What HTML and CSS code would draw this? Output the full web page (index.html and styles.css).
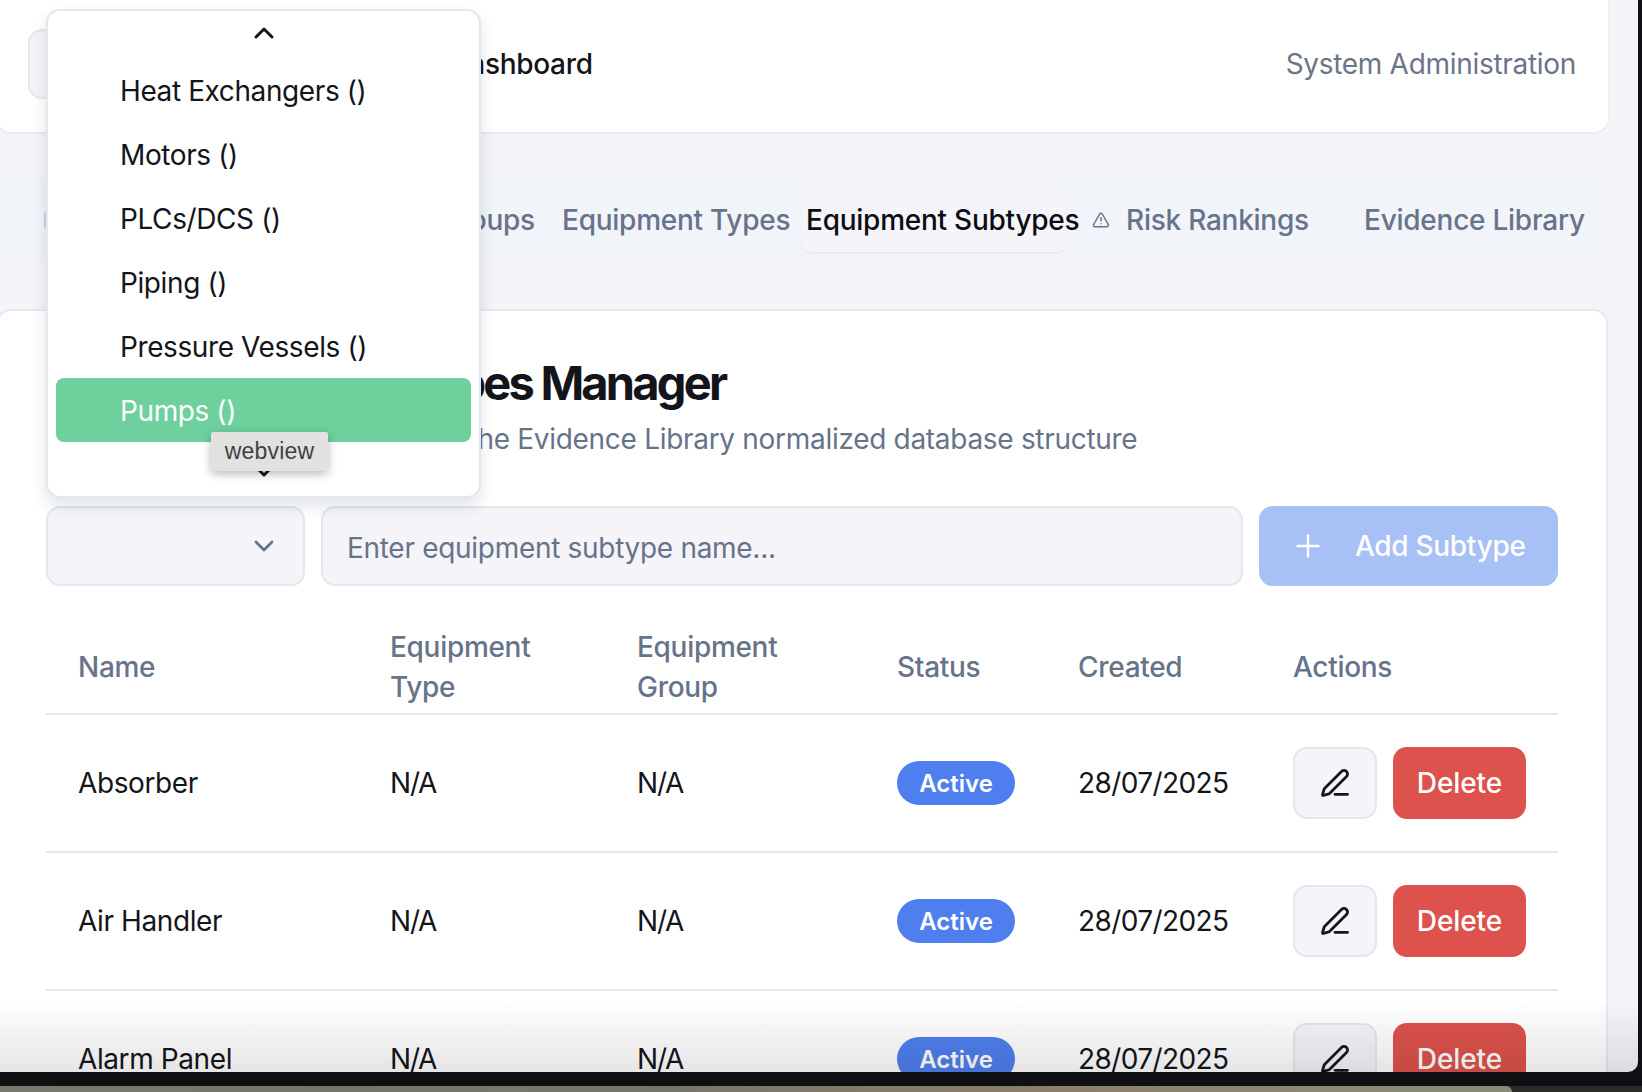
FILE: index.html
```html
<!DOCTYPE html>
<html lang="en">
<head>
  <meta charset="UTF-8">
  <title>Equipment Subtypes Manager</title>
  <link rel="stylesheet" href="styles.css">
</head>
<body>
  <div class="window">
    <div class="page">
      <header class="top-card">
        <a class="back-btn">Back</a>
        <span class="top-title">Admin Dashboard</span>
        <span class="top-note">System Administration</span>
      </header>

      <nav class="tabs">
        <svg class="first-tab-icon" viewBox="0 0 24 24" fill="none" stroke="currentColor" stroke-width="2"><rect x="1" y="3" width="22" height="18" rx="3"/></svg>
        <span class="tab tab-groups">Equipment Groups</span>
        <span class="tab tab-types">Equipment Types</span>
        <span class="tab tab-subtypes">Equipment Subtypes</span>
        <span class="tab tab-risk">
          <svg class="warn-icon" viewBox="0 0 24 24" fill="none" stroke="currentColor" stroke-width="2" stroke-linecap="round" stroke-linejoin="round">
            <path d="M21.7 18 13.7 4a2 2 0 0 0-3.5 0l-8 14a2 2 0 0 0 1.8 3h16a2 2 0 0 0 1.7-3"/>
            <path d="M12 9v4"/>
            <path d="M12 17h.01"/>
          </svg>
          Risk Rankings
        </span>
        <span class="tab tab-evidence">Evidence Library</span>
      </nav>

      <main class="manager">
        <h1>Equipment Subtypes Manager</h1>
        <p class="subtitle">Manage equipment subtypes in the Evidence Library normalized database structure</p>

        <div class="add-row">
          <div class="select-box">
            <svg class="chev" viewBox="0 0 24 24" fill="none" stroke="currentColor" stroke-width="2" stroke-linecap="round" stroke-linejoin="round"><path d="m6 9 6 6 6-6"/></svg>
          </div>
          <div class="name-input">Enter equipment subtype name...</div>
          <button class="add-btn" type="button">
            <svg class="plus" viewBox="0 0 24 24" fill="none" stroke="currentColor" stroke-width="1.6" stroke-linecap="round"><path d="M5 12h14"/><path d="M12 5v14"/></svg>
            Add Subtype
          </button>
        </div>

        <table>
          <thead>
            <tr>
              <th class="col-name">Name</th>
              <th class="col-type">Equipment<br>Type</th>
              <th class="col-group">Equipment<br>Group</th>
              <th class="col-status">Status</th>
              <th class="col-created">Created</th>
              <th>Actions</th>
            </tr>
          </thead>
          <tbody>
            <tr>
              <td>Absorber</td>
              <td class="na">N/A</td>
              <td class="na">N/A</td>
              <td><span class="badge">Active</span></td>
              <td class="date">28/07/2025</td>
              <td>
                <div class="actions">
                  <button class="edit-btn" type="button">
                    <svg viewBox="0 0 24 24" fill="none" stroke="currentColor" stroke-width="2.2" stroke-linecap="round" stroke-linejoin="round"><path d="M12 21h10"/><path d="M21.2 6.8a2.8 2.8 0 0 0-4-4L3.8 16.2a2 2 0 0 0-.5.8l-1.3 4.4a.5.5 0 0 0 .6.6l4.4-1.3a2 2 0 0 0 .8-.5z"/></svg>
                  </button>
                  <button class="delete-btn" type="button">Delete</button>
                </div>
              </td>
            </tr>
            <tr>
              <td>Air Handler</td>
              <td class="na">N/A</td>
              <td class="na">N/A</td>
              <td><span class="badge">Active</span></td>
              <td class="date">28/07/2025</td>
              <td>
                <div class="actions">
                  <button class="edit-btn" type="button">
                    <svg viewBox="0 0 24 24" fill="none" stroke="currentColor" stroke-width="2.2" stroke-linecap="round" stroke-linejoin="round"><path d="M12 21h10"/><path d="M21.2 6.8a2.8 2.8 0 0 0-4-4L3.8 16.2a2 2 0 0 0-.5.8l-1.3 4.4a.5.5 0 0 0 .6.6l4.4-1.3a2 2 0 0 0 .8-.5z"/></svg>
                  </button>
                  <button class="delete-btn" type="button">Delete</button>
                </div>
              </td>
            </tr>
            <tr>
              <td>Alarm Panel</td>
              <td class="na">N/A</td>
              <td class="na">N/A</td>
              <td><span class="badge">Active</span></td>
              <td class="date">28/07/2025</td>
              <td>
                <div class="actions">
                  <button class="edit-btn" type="button">
                    <svg viewBox="0 0 24 24" fill="none" stroke="currentColor" stroke-width="2.2" stroke-linecap="round" stroke-linejoin="round"><path d="M12 21h10"/><path d="M21.2 6.8a2.8 2.8 0 0 0-4-4L3.8 16.2a2 2 0 0 0-.5.8l-1.3 4.4a.5.5 0 0 0 .6.6l4.4-1.3a2 2 0 0 0 .8-.5z"/></svg>
                  </button>
                  <button class="delete-btn" type="button">Delete</button>
                </div>
              </td>
            </tr>
          </tbody>
        </table>
      </main>
    </div>

    <div class="dropdown">
      <svg class="scroll-arrow arrow-up" viewBox="0 0 24 24" fill="none" stroke="currentColor" stroke-width="2.2" stroke-linecap="round" stroke-linejoin="round"><path d="m18 15-6-6-6 6"/></svg>
      <div class="option">Heat Exchangers ()</div>
      <div class="option">Motors ()</div>
      <div class="option">PLCs/DCS ()</div>
      <div class="option">Piping ()</div>
      <div class="option">Pressure Vessels ()</div>
      <div class="option option-active">Pumps ()</div>
      <svg class="scroll-arrow arrow-down" viewBox="0 0 24 24" fill="none" stroke="currentColor" stroke-width="2.2" stroke-linecap="round" stroke-linejoin="round"><path d="m6 9 6 6 6-6"/></svg>
    </div>
    <div class="tooltip">webview</div>
    <div class="window-shade"></div>
  </div>
  <div class="desktop">
    <div class="desktop-shape"></div>
  </div>
</body>
</html>
```

FILE: styles.css
```css
* {
  box-sizing: border-box;
}

html, body {
  margin: 0;
  height: 1092px;
  overflow: hidden;
}

body {
  font-family: 'Inter', 'Liberation Sans', sans-serif;
  background: #0f0f14;
  color: #14151a;
  font-size: 28px;
  letter-spacing: -0.3px;
}

.window {
  position: relative;
  width: 1638px;
  height: 1072px;
  overflow: hidden;
  background: #f4f4f9;
  border-radius: 0 0 10px 0;
}

.page {
  display: flex;
  flex-direction: column;
  margin-left: -3px;
  width: 1611px;
  margin-top: -20px;
}

.top-card {
  display: flex;
  align-items: center;
  height: 152px;
  padding: 16px 32px 0 31px;
  background: #fff;
  border-radius: 14px;
  box-shadow: 0 1px 3px rgba(20, 30, 60, 0.08);
}

.back-btn {
  width: 120px;
  height: 70px;
  padding-left: 30px;
  line-height: 66px;
  border: 2px solid #e3e7ee;
  border-radius: 14px;
  background: #f4f4f9;
}

.top-title {
  margin-left: 210px;
  font-weight: 500;
  white-space: nowrap;
}

.top-note {
  margin-left: auto;
  color: #6c7585;
}

.tabs {
  display: flex;
  align-items: center;
  height: 80px;
  margin-top: 48px;
  background: #f1f4f9;
  border-radius: 14px;
  font-weight: 500;
  color: #66738a;
  letter-spacing: -0.25px;
  white-space: nowrap;
}

.first-tab-icon {
  flex: none;
  width: 22px;
  height: 22px;
  margin-left: 47px;
  color: #c9d0dc;
}

.tab {
  display: block;
  flex: none;
}

.tab-groups {
  margin-left: 225px;
  width: 271px;
}

.tab-types {
  width: 240px;
}

.tab-subtypes {
  width: 264px;
  height: 64px;
  line-height: 64px;
  padding-left: 4px;
  background: #f4f4f9;
  border-radius: 8px;
  box-shadow: 0 1px 2px rgba(20, 30, 60, 0.06);
  color: #0c0d12;
}

.tab-risk {
  display: flex;
  align-items: center;
  gap: 16px;
  width: 298px;
  padding-left: 26px;
}

.warn-icon {
  width: 18px;
  height: 18px;
  flex: none;
}

.manager {
  margin-top: 49px;
  padding: 44px 48px 0 47px;
  background: #fff;
  border: 2px solid #e6e9f0;
  border-radius: 14px;
  height: 900px;
}

h1 {
  margin: 0 0 0 58px;
  font-size: 47px;
  line-height: 56px;
  font-weight: 700;
  letter-spacing: -2.8px;
  color: #14151a;
  white-space: nowrap;
}

.subtitle {
  margin: 8px 0 0 7px;
  color: #66738a;
  line-height: 40px;
  white-space: nowrap;
}

.add-row {
  display: flex;
  gap: 16px;
  margin-top: 47px;
  height: 80px;
}

.select-box {
  display: flex;
  align-items: center;
  justify-content: flex-end;
  width: 259px;
  padding-right: 23px;
  border: 2px solid #e3e7ee;
  border-radius: 14px;
  background: #f4f4f9;
  color: #66738a;
}

.chev {
  width: 32px;
  height: 32px;
}

.name-input {
  flex: 1;
  display: flex;
  align-items: center;
  padding: 4px 0 0 24px;
  border: 2px solid #e3e7ee;
  border-radius: 14px;
  background: #f4f4f9;
  color: #66738a;
}

.add-btn {
  display: flex;
  align-items: center;
  gap: 29px;
  width: 299px;
  padding: 0 0 0 31px;
  border: none;
  border-radius: 14px;
  background: #a7c0f6;
  color: #fff;
  font: 500 28px 'Inter', sans-serif;
  letter-spacing: -0.3px;
}

.plus {
  width: 36px;
  height: 36px;
  flex: none;
}

table {
  width: 1512px;
  margin-top: 26px;
  border-collapse: collapse;
  table-layout: fixed;
}

th {
  padding: 8px 0 0;
  height: 102px;
  font-weight: 500;
  color: #66738a;
  text-align: left;
  line-height: 40px;
  vertical-align: middle;
  border-bottom: 2px solid #e3e7ee;
}

th.col-name {
  width: 344px;
  padding-left: 32px;
}

.col-type {
  width: 247px;
}

.col-group {
  width: 260px;
}

.col-status {
  width: 181px;
}

.col-created {
  width: 215px;
}

td {
  height: 138px;
  padding: 0;
  border-bottom: 2px solid #e3e7ee;
  vertical-align: middle;
  letter-spacing: -0.4px;
}

td:first-child {
  padding-left: 32px;
}

td.na {
  letter-spacing: -1.2px;
}

td.date {
  letter-spacing: -0.6px;
}

.badge {
  display: inline-flex;
  align-items: center;
  justify-content: center;
  width: 118px;
  height: 44px;
  border-radius: 22px;
  background: #4f7fef;
  color: #fff;
  font-size: 24px;
  font-weight: 600;
  letter-spacing: 0;
  vertical-align: middle;
}

.actions {
  display: flex;
  gap: 16px;
}

.edit-btn {
  display: flex;
  align-items: center;
  justify-content: center;
  width: 84px;
  height: 72px;
  padding: 0;
  border: 2px solid #e3e7ee;
  border-radius: 14px;
  background: #f4f4f9;
  color: #14151a;
}

.edit-btn svg {
  width: 30px;
  height: 30px;
}

.delete-btn {
  width: 133px;
  height: 72px;
  padding: 0;
  border: none;
  border-radius: 14px;
  background: #dd524c;
  color: #fff;
  font: 500 28px 'Inter', sans-serif;
  letter-spacing: -0.1px;
}

.dropdown {
  position: absolute;
  left: 46px;
  top: 9px;
  width: 435px;
  height: 489px;
  padding: 8px;
  background: #fff;
  border: 2px solid #e3e7ee;
  border-radius: 14px;
  box-shadow: 0 8px 16px rgba(20, 30, 60, 0.12);
}

.scroll-arrow {
  display: block;
  width: 32px;
  height: 32px;
  margin: 0 auto;
  color: #14151a;
}

.arrow-up {
  margin-top: -2px;
  margin-bottom: 9px;
}

.arrow-down {
  margin-top: 13px;
}

.option {
  height: 64px;
  padding-left: 64px;
  line-height: 66px;
  border-radius: 8px;
  letter-spacing: -0.4px;
}

.option-active {
  background: #6dd09d;
  color: #fff;
}

.tooltip {
  position: absolute;
  left: 211px;
  top: 432px;
  width: 117px;
  height: 39px;
  line-height: 39px;
  text-align: center;
  background: #e2e1df;
  color: #3f3f3f;
  font-family: 'Liberation Sans', sans-serif;
  font-size: 23px;
  letter-spacing: 0.2px;
  border-radius: 2px;
  box-shadow: 0 3px 10px rgba(0, 0, 0, 0.28);
}

.window-shade {
  position: absolute;
  left: 0;
  right: 0;
  bottom: 0;
  height: 72px;
  background: linear-gradient(rgba(0, 0, 0, 0), rgba(0, 0, 0, 0.1));
}

.desktop {
  height: 6px;
  margin-top: 14px;
  background: #2b2a26;
}

.desktop-shape {
  width: 1512px;
  height: 6px;
  border-radius: 0 16px 0 0;
  background: linear-gradient(90deg, #75786c, #77766a 45%, #8c7f69 70%, #8a8a78 92%);
}
```
